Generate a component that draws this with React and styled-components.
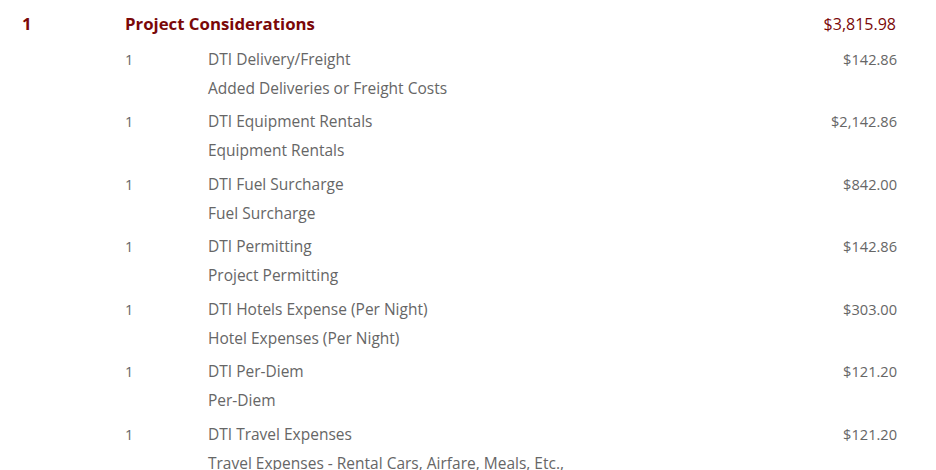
import React from "react";
import styled, { createGlobalStyle } from "styled-components";

const GlobalStyle = createGlobalStyle`
  body {
    margin: 0;
    background: #fff;
    font-family: "Open Sans", "Noto Sans", sans-serif;
  }
`;

const items = [
  { qty: 1, name: "DTI Delivery/Freight", desc: "Added Deliveries or Freight Costs", price: "$142.86" },
  { qty: 1, name: "DTI Equipment Rentals", desc: "Equipment Rentals", price: "$2,142.86" },
  { qty: 1, name: "DTI Fuel Surcharge", desc: "Fuel Surcharge", price: "$842.00" },
  { qty: 1, name: "DTI Permitting", desc: "Project Permitting", price: "$142.86" },
  { qty: 1, name: "DTI Hotels Expense (Per Night)", desc: "Hotel Expenses (Per Night)", price: "$303.00" },
  { qty: 1, name: "DTI Per-Diem", desc: "Per-Diem", price: "$121.20" },
  { qty: 1, name: "DTI Travel Expenses", desc: "Travel Expenses - Rental Cars, Airfare, Meals, Etc.,", price: "$121.20" },
];

export default function App() {
  return (
    <>
      <GlobalStyle />
      <Section>
        <GroupRow>
          <GroupNo>1</GroupNo>
          <GroupTitle>Project Considerations</GroupTitle>
          <GroupTotal>$3,815.98</GroupTotal>
        </GroupRow>
        {items.map((it, i) => (
          <ItemRow key={i}>
            <Qty>{it.qty}</Qty>
            <Info>
              <Line>{it.name}</Line>
              <Line>{it.desc}</Line>
            </Info>
            <Price>{it.price}</Price>
          </ItemRow>
        ))}
      </Section>
    </>
  );
}

const Section = styled.div`
  width: 936px;
  height: 470px;
  overflow: hidden;
  padding: 9px 39px 0 22px;
  box-sizing: border-box;
`;

const GroupRow = styled.div`
  display: grid;
  grid-template-columns: 103px 1fr auto;
  align-items: center;
  height: 30px;
  padding-bottom: 3px;
  color: #7a0808;
  font-size: 16.8px;
  line-height: 30px;
`;

const GroupNo = styled.div`
  font-weight: 700;
`;

const GroupTitle = styled.div`
  font-weight: 700;
`;

const GroupTotal = styled.div`
  font-weight: 400;
  font-size: 16px;
  padding-right: 1px;
`;

const ItemRow = styled.div`
  display: grid;
  grid-template-columns: 83px 1fr auto;
  padding: 2.5px 0 2px 103px;
  color: #666;
  font-size: 15.5px;
  line-height: 29px;
`;

const Qty = styled.div`
  font-size: 14.5px;
`;

const Info = styled.div`
  display: flex;
  flex-direction: column;
`;

const Line = styled.div`
  white-space: nowrap;
`;

const Price = styled.div`
  text-align: right;
  font-size: 14.6px;
`;
